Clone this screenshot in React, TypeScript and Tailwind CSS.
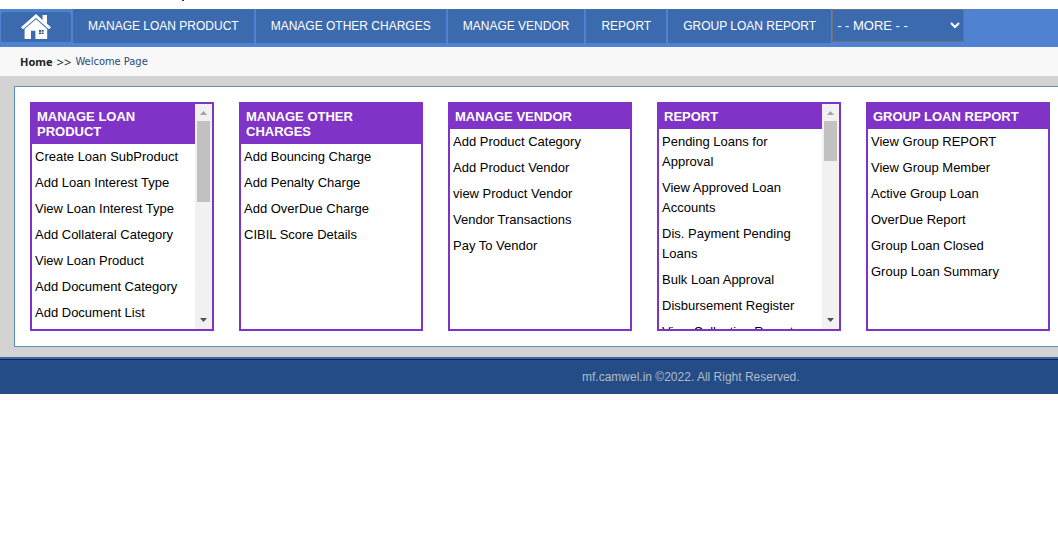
type Menu = { title: string; items: string[]; thumb?: string };

const menus: Menu[] = [
  {
    title: "MANAGE LOAN PRODUCT",
    items: [
      "Create Loan SubProduct",
      "Add Loan Interest Type",
      "View Loan Interest Type",
      "Add Collateral Category",
      "View Loan Product",
      "Add Document Category",
      "Add Document List",
    ],
    thumb: "h-[81px]",
  },
  {
    title: "MANAGE OTHER CHARGES",
    items: [
      "Add Bouncing Charge",
      "Add Penalty Charge",
      "Add OverDue Charge",
      "CIBIL Score Details",
    ],
  },
  {
    title: "MANAGE VENDOR",
    items: [
      "Add Product Category",
      "Add Product Vendor",
      "view Product Vendor",
      "Vendor Transactions",
      "Pay To Vendor",
    ],
  },
  {
    title: "REPORT",
    items: [
      "Pending Loans for Approval",
      "View Approved Loan Accounts",
      "Dis. Payment Pending Loans",
      "Bulk Loan Approval",
      "Disbursement Register",
      "View Collection Report",
    ],
    thumb: "h-10",
  },
  {
    title: "GROUP LOAN REPORT",
    items: [
      "View Group REPORT",
      "View Group Member",
      "Active Group Loan",
      "OverDue Report",
      "Group Loan Closed",
      "Group Loan Summary",
    ],
  },
];

function HouseIcon() {
  return (
    <svg width="30" height="26" viewBox="0 0 30 26" aria-hidden="true">
      <path
        fill="#fff"
        d="M15 0 L21.6 5.9 V1 H26 V9.8 L30 13.2 L28 15.2 L15 4 L2 15.2 L0 13.2 Z"
      />
      <path fill="#fff" d="M15 5.2 L26.2 15 V25 H14.4 V16.8 H10 V25 H3.6 V15 Z" />
      <path fill="#27508f" d="M18 16h2v1.7h-2zM20.6 16h2v1.7h-2zM18 18.4h2v1.7h-2zM20.6 18.4h2v1.7h-2z" />
    </svg>
  );
}

function Arrow({ up }: { up?: boolean }) {
  return (
    <svg width="17" height="17" viewBox="0 0 17 17" aria-hidden="true" className="shrink-0">
      {up ? <path fill="#a3a3a3" d="M5 11h7L8.5 7z" /> : <path fill="#505050" d="M5 6h7L8.5 10z" />}
    </svg>
  );
}

function MenuCard({ menu }: { menu: Menu }) {
  return (
    <section className="flex h-[229px] w-[184px] border-2 border-[#8033c7] bg-white">
      <div className="min-w-0 flex-1 overflow-y-auto [scrollbar-width:none]">
        <h2 className="bg-[#8033c7] p-[5px] text-[13px] leading-[15px] font-bold text-white">
          {menu.title}
        </h2>
        <ul>
          {menu.items.map((item) => (
            <li key={item} className="p-[3px] text-[13px] leading-5">
              <a href="#" className="block text-black">
                {item}
              </a>
            </li>
          ))}
        </ul>
      </div>
      {menu.thumb && (
        <div className="flex w-[17px] shrink-0 flex-col items-center bg-[#f1f1f1]">
          <Arrow up />
          <div className={`w-[13px] bg-[#c1c1c1] ${menu.thumb}`} />
          <div className="flex-1" />
          <Arrow />
        </div>
      )}
    </section>
  );
}

export default function App() {
  return (
    <div className="bg-white font-['Liberation_Sans',Arial,sans-serif]">
      <header className="h-[9px] pl-[182px]">
        <div className="h-px w-0.5 bg-[#333]" />
      </header>
      <nav className="flex min-h-[38px] items-start bg-[#5182d1]">
        <a
          href="#"
          aria-label="Home"
          className="mt-[3px] mr-0.5 ml-px flex h-[30px] w-[70px] shrink-0 items-center justify-center rounded-t-[4px] bg-[#3c6aae]"
        >
          <HouseIcon />
        </a>
        {menus.map((menu) => (
          <a
            key={menu.title}
            href="#"
            className="mr-0.5 h-[34px] bg-[#3c6aae] px-[15px] text-[12px] leading-[34px] whitespace-nowrap text-white last-of-type:mr-px"
          >
            {menu.title}
          </a>
        ))}
        <select
          aria-label="More menus"
          className="h-[33px] w-[132px] border border-[#6b7280] bg-[#3c6aae] text-[13px] text-white"
        >
          <option>- - MORE - -</option>
        </select>
      </nav>
      <div className="flex h-[29px] items-center gap-1 bg-[#f8f8f8] pl-5 font-['Noto_Sans',sans-serif] text-[11px] leading-4 text-[#222]">
        <b>Home</b>
        <span className="text-[13px]">&gt;&gt;</span>
        <a
          href="#"
          className="font-['DejaVu_Sans_Condensed','DejaVu_Sans',sans-serif] text-[#2b4a80]"
        >
          Welcome Page
        </a>
      </div>
      <main className="bg-[#d3d3d3] pt-[10px] pb-[10px] pl-[14px]">
        <div className="flex flex-wrap gap-[25px] border-y border-l border-[#5a90bd] bg-white py-[15px] pl-[15px]">
          {menus.map((menu) => (
            <MenuCard key={menu.title} menu={menu} />
          ))}
        </div>
      </main>
      <footer className="border-t-2 border-[#3966a5] bg-[#244d87]">
        <p className="border-t border-[#0b2560] pl-[582px] text-[12px] leading-[34px] text-[#b0b9c8]">
          mf.camwel.in ©2022. All Right Reserved.
        </p>
      </footer>
    </div>
  );
}
